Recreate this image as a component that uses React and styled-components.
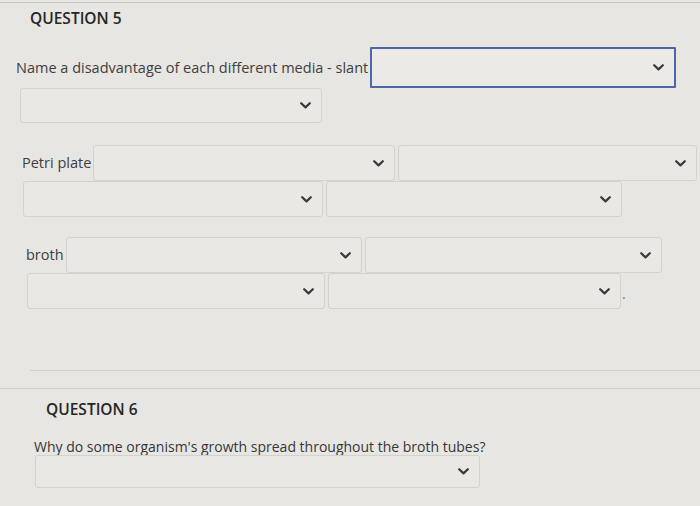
import React from "react";
import styled, { createGlobalStyle } from "styled-components";

const GlobalStyle = createGlobalStyle`
  html, body {
    margin: 0;
    padding: 0;
    background: #e7e6e3;
  }
  body {
    font-family: "Open Sans", "Noto Sans", sans-serif;
    color: #3c3c3c;
  }
`;

const Chevron = () => (
  <svg width="11" height="7" viewBox="0 0 11 7" fill="none">
    <path d="M1.2 1.2 L5.5 5.4 L9.8 1.2" stroke="#3a3a3a" strokeWidth="2.2" strokeLinecap="round" strokeLinejoin="round" />
  </svg>
);

function Select({ width, height = 35, active }) {
  return (
    <SelectBox $width={width} $height={height} $active={active}>
      <Chevron />
    </SelectBox>
  );
}

function App() {
  return (
    <Page>
      <GlobalStyle />
      <TopRule />
      <Question>
        <Title $indent={30} $top={5}>QUESTION 5</Title>
        <Line $indent={16} $top={19}>
          <Label>Name a disadvantage of each different media - slant</Label>
          <Select width={306} height={41} active />
        </Line>
        <Line $indent={20}>
          <Select width={302} />
        </Line>

        <Line $indent={22} $top={22}>
          <Label>Petri plate</Label>
          <Select width={302} height={36} />
          <Select width={299} height={36} />
        </Line>
        <Line $indent={23}>
          <Select width={300} height={36} />
          <Select width={296} height={36} />
        </Line>

        <Line $indent={26} $top={20}>
          <Label>broth</Label>
          <Select width={296} height={36} />
          <Select width={297} height={36} />
        </Line>
        <Line $indent={27}>
          <Select width={298} height={36} />
          <Select width={293} height={36} />
          <Dot>.</Dot>
        </Line>
      </Question>

      <Divider $indent={30} $top={61} />
      <Divider $indent={0} $top={17} />

      <Question>
        <Title $indent={46} $top={10}>QUESTION 6</Title>
        <Prompt>Why do some organism's growth spread throughout the broth tubes?</Prompt>
        <Line $indent={35} $top={-2}>
          <Select width={445} height={33} />
        </Line>
      </Question>
    </Page>
  );
}

export default App;

const Page = styled.div`
  width: 700px;
  height: 506px;
  overflow: hidden;
  background: #e7e6e3;
`;

const TopRule = styled.div`
  height: 2px;
  border-bottom: 1px solid #c4c4c1;
`;

const Question = styled.section`
  display: flex;
  flex-direction: column;
`;

const Title = styled.h3`
  margin: ${(p) => p.$top || 6}px 0 0 ${(p) => p.$indent}px;
  font-size: 15.5px;
  font-weight: 600;
  line-height: 20px;
  color: #262626;
`;

const Line = styled.div`
  display: flex;
  align-items: center;
  margin: ${(p) => p.$top || 0}px 0 0 ${(p) => p.$indent}px;
`;

const Label = styled.span`
  font-size: 14.5px;
  line-height: 20px;
  color: #404040;
  margin-right: 2px;
  white-space: nowrap;
`;

const SelectBox = styled.div`
  box-sizing: border-box;
  flex: none;
  display: flex;
  align-items: center;
  justify-content: flex-end;
  width: ${(p) => p.$width}px;
  height: ${(p) => p.$height}px;
  padding-right: 10px;
  margin-right: 3px;
  border: ${(p) => (p.$active ? "2px solid #4b67a6" : "1px solid #d2d2cf")};
  border-radius: ${(p) => (p.$active ? "1px" : "3px")};
  background: ${(p) => (p.$active ? "#ebeae7" : "#e9e8e5")};
`;

const Dot = styled.span`
  font-size: 14px;
  color: #777;
  margin-left: -2px;
  margin-top: 4px;
`;

const Divider = styled.div`
  margin: ${(p) => p.$top}px 0 0 ${(p) => p.$indent}px;
  border-top: 1px solid #cfcfcc;
`;

const Prompt = styled.p`
  margin: 18px 0 0 34px;
  font-size: 14px;
  line-height: 20px;
  color: #363636;
`;
